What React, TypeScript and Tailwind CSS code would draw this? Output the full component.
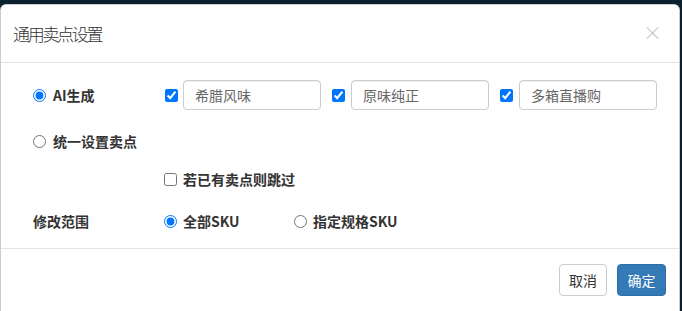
import React from 'react';

const font = { fontFamily: '"Noto Sans CJK SC", "Liberation Sans", sans-serif' };

const tags = ['希腊风味', '原味纯正', '多箱直播购'];

const App: React.FC = () => {
  return (
    <div className="h-[311px] w-[682px] overflow-hidden bg-[#0c2130] pt-1" style={font}>
      <div className="h-[320px] w-[680px] rounded-[6px] border border-[rgba(0,0,0,0.2)] bg-white text-[14px] text-[#333]">
        <div className="flex h-[58px] items-center justify-between border-b border-[#e5e5e5] pl-[12px] pr-[17px]">
          <h4 className="text-[17px] font-light tracking-[-2.3px] text-[#333]">通用卖点设置</h4>
          <button className="-mt-1 text-[19px] font-light leading-none text-black opacity-25">×</button>
        </div>

        <div className="h-[185px] pl-[32px] pt-[17px]">
          <div className="flex h-[30px] items-center">
            <label className="flex w-[132px] items-center gap-[7px] font-bold">
              <input type="radio" name="mode" defaultChecked className="m-0 h-[13px] w-[13px]" />
              AI生成
            </label>
            <div className="flex items-center gap-[11px]">
              {tags.map((t, i) => (
                <div key={t} className="flex items-center">
                  <input type="checkbox" defaultChecked className={`m-0 h-[13px] w-[13px] ${i === 0 ? 'mr-[5px]' : 'mr-[6px]'}`} />
                  <input
                    defaultValue={t}
                    className="h-[30px] w-[138px] rounded-[4px] border border-[#ccc] px-[11px] text-[14px] text-[#666] shadow-[inset_0_1px_1px_rgba(0,0,0,0.075)] outline-none"
                  />
                </div>
              ))}
            </div>
          </div>

          <div className="mt-[21px] flex h-[20px] items-center">
            <label className="flex items-center gap-[7px] font-bold">
              <input type="radio" name="mode" className="m-0 h-[13px] w-[13px]" />
              统一设置卖点
            </label>
          </div>

          <div className="mt-[18px] flex h-[20px] items-center pl-[131px]">
            <label className="flex items-center gap-[6px] font-bold">
              <input type="checkbox" className="m-0 h-[13px] w-[13px]" />
              若已有卖点则跳过
            </label>
          </div>

          <div className="mt-[22px] flex h-[20px] items-center">
            <span className="w-[131px] font-bold">修改范围</span>
            <label className="flex w-[130px] items-center gap-[6px] font-bold">
              <input type="radio" name="scope" defaultChecked className="m-0 h-[13px] w-[13px]" />
              全部SKU
            </label>
            <label className="flex items-center gap-[6px] font-bold">
              <input type="radio" name="scope" className="m-0 h-[13px] w-[13px]" />
              指定规格SKU
            </label>
          </div>
        </div>

        <div className="flex justify-end gap-[10px] border-t border-[#e5e5e5] pr-[13px] pt-[15px]">
          <button className="h-[32px] w-[48px] rounded-[4px] border border-[#ccc] bg-white text-[14px] text-[#333]">取消</button>
          <button className="h-[32px] w-[49px] rounded-[4px] border border-[#2e6da4] bg-[#337ab7] text-[14px] text-white">确定</button>
        </div>
      </div>
    </div>
  );
};

export default App;
